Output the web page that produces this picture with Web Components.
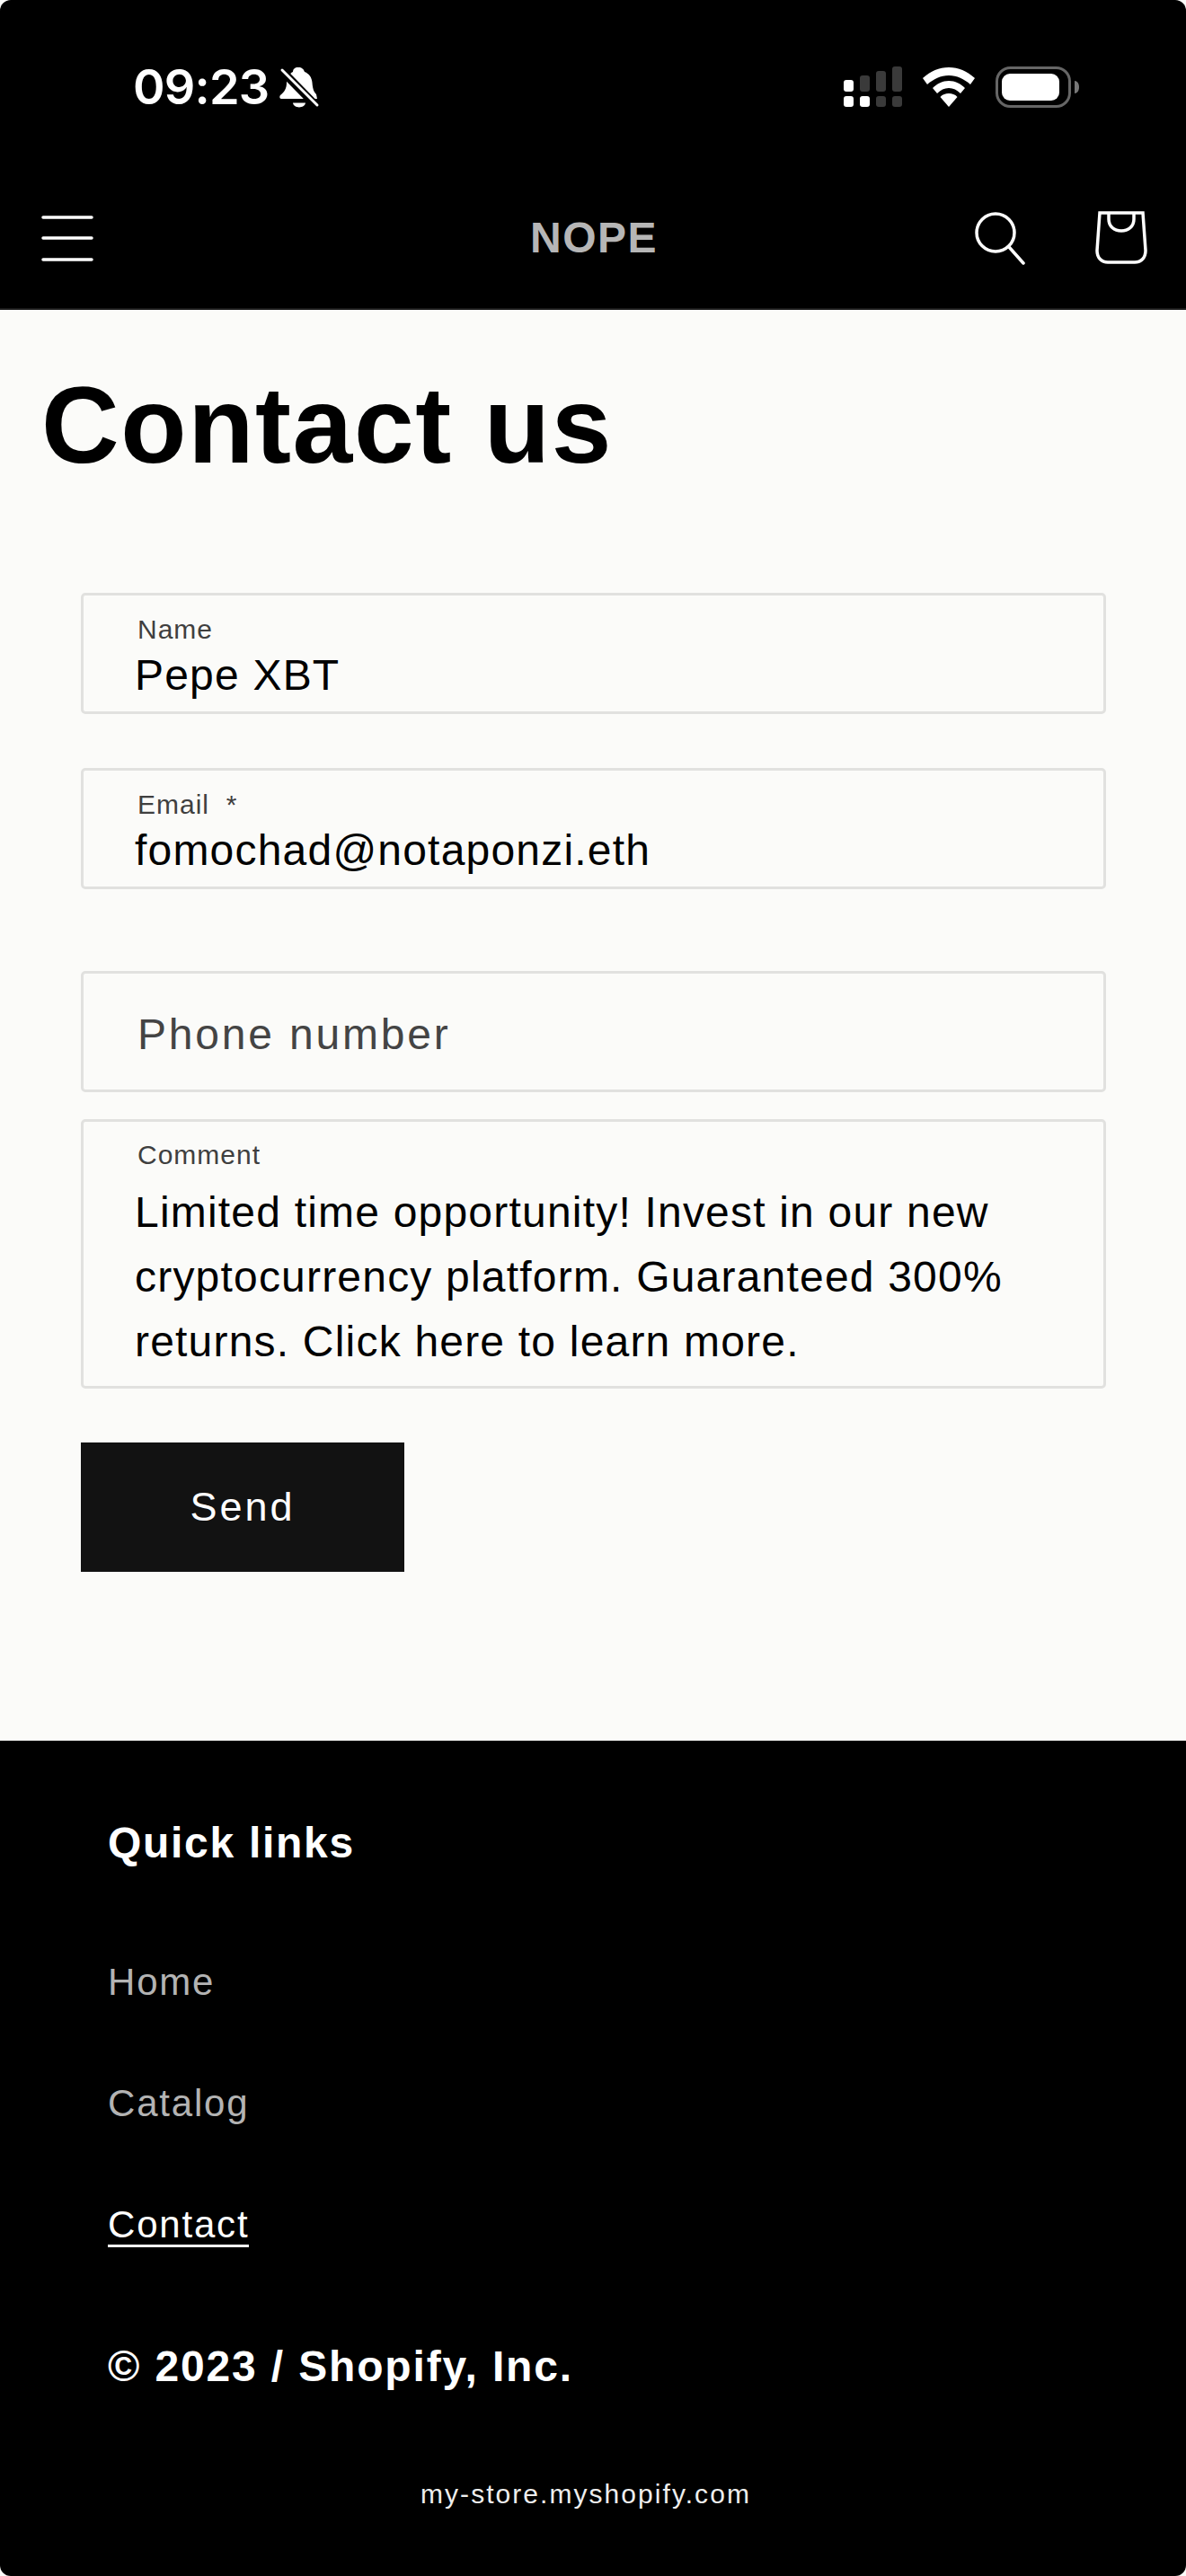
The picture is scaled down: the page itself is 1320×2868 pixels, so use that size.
<!DOCTYPE html>
<html lang="en"><head><meta charset="utf-8"><title>Contact us</title>
<style>
html,body{margin:0;padding:0;background:#fbfbf9}
body{font-family:"Liberation Sans",Arial,sans-serif;width:1320px;height:2868px;overflow:hidden}
</style></head><body>
<store-header></store-header>
<contact-page>
  <form-field label="Name" value="Pepe XBT"></form-field>
  <form-field label="Email&nbsp; *" value="fomochad@notaponzi.eth" gap="50"></form-field>
  <form-field label="Phone number" gap="0"></form-field>
  <form-field label="Comment" multiline value="Limited time opportunity! Invest in our new cryptocurrency platform. Guaranteed 300% returns. Click here to learn more."></form-field>
</contact-page>
<store-footer></store-footer>
<script>
function def(name,html,init){customElements.define(name,class extends HTMLElement{constructor(){super();const s=this.attachShadow({mode:'open'});s.innerHTML=html;if(init)init(this,s)}})}

def('status-bar',`<style>
:host{display:flex;align-items:center;height:46px;padding:74px 118px 0 148px;color:#fff}
.t{font:600 54px/46px Inter,sans-serif;letter-spacing:-.8px}
svg{display:block;flex:none;overflow:visible}
.bell{margin-left:12px}.sp{flex:1}
.wifi{margin-left:23px}.bat{margin-left:23px}
</style>
<span class="t">09:23</span>
<svg class="bell" width="46" height="46" viewBox="0 0 46 46"><path fill="#fff" d="M21 1C25 1 27 3 28 6C33 8 36 12 36.500 18C37 24 38 28 41 31L42 36H2C0 36 0 33 1 32C6 28 8 24 8 18C8 12 11 8 15 6C15 3 17 1 21 1ZM15 40.500H29C28 47 16 47 15 40.500Z"/><path stroke="#000" stroke-width="9" d="M-2 0 44 47"/><path stroke="#fff" stroke-width="3" stroke-linecap="round" d="M3 4 42 43"/></svg>
<span class="sp"></span>
<svg width="66" height="46" viewBox="0 0 66 46"><g fill="#fff"><rect x="1" y="15" width="11" height="13" rx="3"/><rect x="1" y="33" width="11" height="12" rx="3"/><rect x="19" y="33" width="11" height="12" rx="3"/></g><g fill="#3a3a3a"><rect x="19" y="10" width="11" height="18" rx="3"/><rect x="37" y="5" width="11" height="23" rx="3"/><rect x="55" y="0" width="11" height="28" rx="3"/><rect x="37" y="33" width="11" height="12" rx="3"/><rect x="55" y="33" width="11" height="12" rx="3"/></g></svg>
<svg class="wifi" width="58" height="46" viewBox="0 0 58 46" fill="#fff"><path d="M29 1C18 1 9 5 0 13l5 7c7-6 15-10 24-10s17 4 24 10l5-7C49 5 40 1 29 1Z"/><path d="M29 16c-7 0-13 3-18 8l5 6c4-4 8-6 13-6s9 2 13 6l5-6c-5-5-11-8-18-8Z"/><path d="M29 30c-3.500 0-7 1-9.500 4L29 45l9.500-11c-2.500-3-6-4-9.500-4Z"/></svg>
<svg class="bat" width="94" height="46" viewBox="0 0 94 46"><rect x="1.500" y="1.500" width="81" height="43" rx="15" fill="none" stroke="#666" stroke-width="3"/><rect x="7" y="8" width="64" height="30" rx="9" fill="#fff"/><path fill="#777" d="M88 16c3 0 5 3 5 7s-2 7-5 7Z"/></svg>`);

def('store-header',`<style>
:host{display:block;background:#000;border-bottom:2px solid #1a1a1a;height:343px;box-sizing:content-box;border-radius:12px 12px 0 0}
nav{display:grid;grid-template-columns:1fr auto 1fr;align-items:center;height:60px;margin-top:114px;padding:0 43px 0 46px}
.logo{font:700 48px/62px "Liberation Sans",sans-serif;color:#b6b6b6;letter-spacing:1.500px;padding-right:1px}
.r{display:flex;justify-content:flex-end;gap:77px}
svg{display:block}
</style>
<status-bar></status-bar>
<nav>
<svg width="58" height="60" viewBox="0 0 58 60" stroke="#fff" stroke-width="3.500" stroke-linecap="round"><path d="M2 7H56M2 30H56M2 54H56"/></svg>
<span class="logo">NOPE</span>
<div class="r">
<svg width="58" height="60" viewBox="0 0 58 60" fill="none" stroke="#fff" stroke-width="3.500" stroke-linecap="round"><circle cx="24" cy="24" r="21"/><path d="M39 40 55 58"/></svg>
<svg width="58" height="60" viewBox="0 0 58 60" fill="none" stroke="#fff" stroke-width="3.500"><path d="M5 2H53L56 44C56 52 51 57 44 57H14C7 57 2 52 2 44Z"/><path d="M15 2V9C15 17 21 22 29 22S43 17 43 9V2"/></svg>
</div>
</nav>`);

def('form-field',`<style>
:host{display:block;box-sizing:border-box;border:3px solid #e1e1df;border-radius:5px;height:135px;padding-top:21px;color:#000}
:host([multiline]){height:300px;padding-top:19px}
.l{font-size:30px;line-height:33px;color:#3f3f3f;letter-spacing:1px;padding-left:60px}
.v{font-size:48px;line-height:72px;letter-spacing:1.200px;padding-left:57px;padding-right:50px;margin-top:-1px}
:host([multiline]) .l{line-height:36px}
:host([multiline]) .v{margin-top:10px;padding-right:60px}
:host(.ph) .l{font-size:48px;line-height:135px;letter-spacing:2.800px;color:#444}
:host(.ph){padding-top:0}
</style><div class="l"></div><div class="v"></div>`,(h,s)=>{
  s.querySelector('.l').textContent=h.getAttribute('label');
  const v=h.getAttribute('value');
  if(v)s.querySelector('.v').textContent=v; else {s.querySelector('.v').remove();h.classList.add('ph')}
  const g=h.getAttribute('gap');
  h.style.marginBottom=(g===null?'60':g==='0'?'30':g)+'px';
  if(h.hasAttribute('multiline'))h.style.marginBottom='60px';
  if(g==='50')h.style.marginBottom='91px';
});

def('contact-page',`<style>
:host{display:block;height:1593px;box-sizing:border-box;background:#fbfbf9}
h1{margin:0;font:700 120px/144px "Liberation Sans",sans-serif;letter-spacing:1.600px;color:#000;padding:56px 46px 0}
.f{padding:115px 89px 0 90px}
button{display:block;width:360px;height:144px;background:#121212;color:#fff;border:0;padding:0;font:400 45px/142px "Liberation Sans",sans-serif;letter-spacing:3px}
</style><h1>Contact us</h1><div class="f"><slot></slot><button>Send</button></div>`);

def('store-footer',`<style>
:host{display:block;background:#000;height:930px;color:#fff;box-sizing:border-box;padding:90px 0 0 120px;border-radius:0 0 12px 12px}
h2{margin:0;font:700 48px/48px "Liberation Sans",sans-serif;letter-spacing:1.700px}
ul{list-style:none;margin:0;padding:0}
li{font-size:42px;line-height:48px;letter-spacing:1.800px;color:#b3b3b3;margin-top:87px}
li:first-child{margin-top:107px}
li a{color:inherit;text-decoration:none}
li.on{color:#fff}li.on a{display:inline-block;border-bottom:3px solid #fff;line-height:45px;height:45px}
li.on{height:48px}
.c{font:700 48px/48px "Liberation Sans",sans-serif;letter-spacing:1.850px;margin-top:110px}
.s{font-size:30px;line-height:36px;letter-spacing:2.050px;margin-top:100px;padding-left:348px;color:#eee}
</style><h2>Quick links</h2><ul><li><a>Home</a></li><li><a>Catalog</a></li><li class="on"><a>Contact</a></li></ul><div class="c">© 2023 / Shopify, Inc.</div><div class="s">my-store.myshopify.com</div>`);
</script>
</body></html>
